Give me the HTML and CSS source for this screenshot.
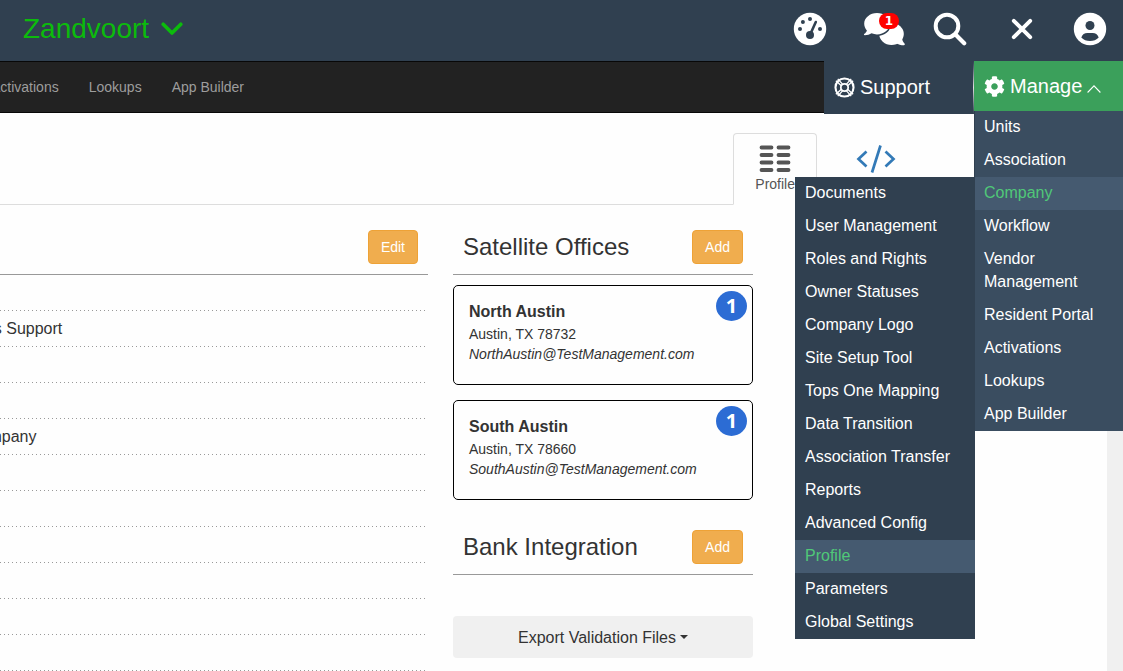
FILE: index.html
```html
<!DOCTYPE html>
<html lang="en">
<head>
<meta charset="utf-8">
<meta name="viewport" content="width=device-width, initial-scale=1">
<title>Zandvoort - Company Profile</title>
<link rel="stylesheet" href="styles.css">
</head>
<body>
<header class="topbar">
  <button type="button" class="brand">
    <span>Zandvoort</span>
    <svg width="22" height="15" viewBox="0 0 22 15" aria-hidden="true"><path d="M2.200 2.200 11 11l8.800-8.800" fill="none" stroke="currentColor" stroke-width="3.600" stroke-linecap="round" stroke-linejoin="round"/></svg>
  </button>
  <div class="tools">
    <button type="button" class="tool tool-gauge" aria-label="Dashboard">
      <svg width="34" height="34" viewBox="0 0 34 34"><circle cx="17" cy="17" r="16.200" fill="#fff"/><g fill="#304050"><circle cx="17" cy="7" r="2"/><circle cx="9.900" cy="9.900" r="2"/><circle cx="7" cy="17" r="2"/><circle cx="27" cy="17" r="2"/><circle cx="17" cy="23" r="4"/></g><path d="M17.600 21.500 22.800 10" stroke="#304050" stroke-width="2.600" stroke-linecap="round"/></svg>
    </button>
    <button type="button" class="tool" aria-label="Messages">
      <svg width="42" height="34" viewBox="0 0 42 34"><g fill="#fff"><ellipse cx="28.500" cy="22" rx="12.300" ry="11"/><path d="M39 26c.2 2 1 4 2.500 5.500.7.700.4 1.700-.5 1.700-3 0-5.800-.8-8-2.300z"/></g><g fill="#fff" stroke="#304050" stroke-width="3" paint-order="stroke"><path d="M14 1C7 1 1.200 5.800 1.200 11.800c0 2.500 1 4.800 2.700 6.600-.4 1.300-1.300 2.500-2.500 3.400-.8.700-.5 1.500.4 1.500 2.600 0 4.900-.8 6.700-2 1.700.7 3.600 1.100 5.500 1.100 7 0 12.700-4.800 12.700-10.700S21 1 14 1z"/></g></svg>
      <span class="count">1</span>
    </button>
    <button type="button" class="tool" aria-label="Search">
      <svg width="34" height="34" viewBox="0 0 34 34"><circle cx="14" cy="14" r="11.300" fill="none" stroke="#fff" stroke-width="4"/><path d="m22.500 22.500 8.700 8.700" stroke="#fff" stroke-width="4.200" stroke-linecap="round"/></svg>
    </button>
    <button type="button" class="tool tool-close" aria-label="Close">
      <svg width="22" height="22" viewBox="0 0 22 22"><path d="m2.800 2.800 16.400 16.400M19.200 2.800 2.800 19.200" stroke="#fff" stroke-width="3.900" stroke-linecap="round"/></svg>
    </button>
    <button type="button" class="tool tool-user" aria-label="Account">
      <svg width="34" height="34" viewBox="0 0 34 34"><circle cx="17" cy="17" r="16.200" fill="#fff"/><circle cx="17" cy="13.500" r="4.500" fill="#304050"/><path d="M8.300 25.400c1-2.900 3.300-4.300 6-4.300h5.400c2.700 0 5 1.400 6 4.300-2.200 2.300-5.200 3.600-8.700 3.600s-6.500-1.300-8.700-3.600z" fill="#304050"/></svg>
    </button>
  </div>
</header>

<nav class="navbar" aria-label="Main">
  <ul class="links">
    <li><a href="#activations">Activations</a></li>
    <li><a href="#lookups">Lookups</a></li>
    <li><a href="#app-builder">App Builder</a></li>
  </ul>
  <div class="actions">
    <button type="button" class="support">
      <svg width="21" height="21" viewBox="0 0 20 20" aria-hidden="true"><g fill="none" stroke="#fff"><circle cx="10" cy="10" r="8.600" stroke-width="2"/><circle cx="10" cy="10" r="3.500" stroke-width="1.700"/><path d="M1.800 3.600 7 8.300M3.600 1.800 8.300 7M16.400 1.800 11.700 7M18.200 3.600 13 8.300M18.200 16.400 13 11.700M16.400 18.200 11.700 13M3.600 18.200 8.300 13M1.800 16.400 7 11.700" stroke-width="1.300"/></g></svg>
      <span>Support</span>
    </button>
    <div class="manage-wrap">
      <button type="button" class="manage" aria-expanded="true">
        <svg width="21" height="21" viewBox="0 0 512 512" aria-hidden="true"><path fill="#fff" d="M487.400 315.700l-42.600-24.600c4.300-23.200 4.300-47 0-70.200l42.600-24.600c4.900-2.800 7.100-8.600 5.500-14-11.100-35.600-30-67.800-54.700-94.600-3.800-4.100-10-5.100-14.800-2.300L380.800 110c-17.900-15.400-38.500-27.300-60.800-35.100V25.800c0-5.600-3.900-10.500-9.400-11.700-36.700-8.200-74.300-7.800-109.200 0-5.500 1.200-9.400 6.100-9.400 11.700V75c-22.200 7.900-42.800 19.800-60.800 35.100L88.700 85.500c-4.900-2.800-11-1.900-14.800 2.300-24.700 26.700-43.600 58.900-54.700 94.600-1.700 5.400.6 11.200 5.500 14L67.300 221c-4.300 23.200-4.300 47 0 70.200l-42.600 24.600c-4.900 2.800-7.100 8.600-5.500 14 11.100 35.600 30 67.800 54.700 94.600 3.800 4.100 10 5.100 14.800 2.300l42.600-24.600c17.900 15.400 38.500 27.300 60.800 35.100v49.200c0 5.600 3.900 10.500 9.400 11.700 36.700 8.200 74.300 7.800 109.200 0 5.500-1.200 9.400-6.100 9.400-11.700v-49.200c22.200-7.900 42.800-19.800 60.800-35.100l42.600 24.600c4.900 2.800 11 1.900 14.800-2.300 24.700-26.700 43.600-58.900 54.700-94.600 1.500-5.500-.7-11.300-5.600-14.100zM256 336c-44.100 0-80-35.900-80-80s35.900-80 80-80 80 35.900 80 80-35.900 80-80 80z"/></svg>
        <span>Manage</span>
        <svg class="up" width="14" height="8" viewBox="0 0 14 8" aria-hidden="true"><path d="m.6 7.500 6.400-6.600 6.400 6.600" fill="none" stroke="#fff" stroke-width="1.100"/></svg>
      </button>
      <ul class="menu">
        <li><a href="#units">Units</a></li>
        <li><a href="#association">Association</a></li>
        <li class="parent">
          <a class="active" href="#company">Company</a>
          <ul class="submenu">
            <li><a href="#documents">Documents</a></li>
            <li><a href="#users">User Management</a></li>
            <li><a href="#roles">Roles and Rights</a></li>
            <li><a href="#statuses">Owner Statuses</a></li>
            <li><a href="#logo">Company Logo</a></li>
            <li><a href="#setup">Site Setup Tool</a></li>
            <li><a href="#mapping">Tops One Mapping</a></li>
            <li><a href="#transition">Data Transition</a></li>
            <li><a href="#transfer">Association Transfer</a></li>
            <li><a href="#reports">Reports</a></li>
            <li><a href="#advanced">Advanced Config</a></li>
            <li><a class="active" href="#profile">Profile</a></li>
            <li><a href="#parameters">Parameters</a></li>
            <li><a href="#settings">Global Settings</a></li>
          </ul>
        </li>
        <li><a href="#workflow">Workflow</a></li>
        <li><a href="#vendors">Vendor Management</a></li>
        <li><a href="#residents">Resident Portal</a></li>
        <li><a href="#menu-activations">Activations</a></li>
        <li><a href="#menu-lookups">Lookups</a></li>
        <li><a href="#menu-builder">App Builder</a></li>
      </ul>
    </div>
  </div>
</nav>

<main class="page">
  <div class="tabs">
    <a class="tab current" href="#profile">
      <svg width="32" height="28" viewBox="0 0 32 28" aria-hidden="true"><path d="M2.500 2.500h10M19.500 2.500h10M2.500 10h10M19.500 10h10M2.500 17.500h10M19.500 17.500h10M2.500 25h10M19.500 25h10" stroke="#555" stroke-width="3.800" stroke-linecap="round"/></svg>
      <span>Profile</span>
    </a>
    <a class="tab code" href="#code" aria-label="Integrations">
      <svg width="40" height="32" viewBox="0 0 40 32" aria-hidden="true"><path d="M10.500 8.500 2.500 16l8 7.500M29.500 8.500l8 7.500-8 7.500M24.500 2.500l-8.500 27" fill="none" stroke="#337ab7" stroke-width="2.700"/></svg>
    </a>
  </div>
  <div class="columns">
    <section class="details">
      <div class="head head-end"><button type="button" class="btn">Edit</button></div>
      <ul class="rows">
        <li></li>
        <li><span>Tops Support</span></li>
        <li></li>
        <li></li>
        <li><span>Company</span></li>
        <li></li>
        <li></li>
        <li></li>
        <li></li>
        <li></li>
        <li></li>
      </ul>
    </section>
    <div class="side">
      <section>
        <div class="head"><h2>Satellite Offices</h2><button type="button" class="btn">Add</button></div>
        <div class="cards">
          <article class="card">
            <h3>North Austin</h3>
            <p>Austin, TX 78732</p>
            <p class="mail">NorthAustin@TestManagement.com</p>
            <span class="badge">1</span>
          </article>
          <article class="card">
            <h3>South Austin</h3>
            <p>Austin, TX 78660</p>
            <p class="mail">SouthAustin@TestManagement.com</p>
            <span class="badge">1</span>
          </article>
        </div>
      </section>
      <section>
        <div class="head"><h2>Bank Integration</h2><button type="button" class="btn">Add</button></div>
        <button type="button" class="export">Export Validation Files <span class="caret"></span></button>
      </section>
    </div>
  </div>
</main>
</body>
</html>
```

FILE: styles.css
```css
* { box-sizing: border-box; }

body {
  margin: 0;
  min-height: 100vh;
  display: flex;
  flex-direction: column;
  overflow: hidden;
  background: #fefefe;
  color: #333;
  font: 16px/23px "Liberation Sans", Arial, sans-serif;
}

ul { margin: 0; padding: 0; list-style: none; }
h2, h3, p { margin: 0; }
a { color: inherit; text-decoration: none; }
button { margin: 0; border: 0; background: none; color: inherit; font: inherit; cursor: pointer; }
svg { display: block; flex: none; }

/* Top bar */
.topbar {
  display: flex;
  justify-content: space-between;
  align-items: center;
  padding: 12px 16px 15px 23px;
  background: #304050;
}
.brand {
  display: flex;
  align-items: center;
  gap: 12px;
  padding: 0;
  color: #0cbb0c;
  font-size: 28px;
  line-height: 32px;
}
.tools { display: flex; align-items: center; gap: 24px; }
.tool {
  position: relative;
  display: flex;
  justify-content: center;
  width: 42px;
  padding: 0;
}
.tool-gauge { width: 58px; }
.tool-close { width: 54px; }
.tool-user { width: 34px; }
.count {
  position: absolute;
  top: 1px;
  left: 16px;
  width: 20px;
  border-radius: 8px;
  background: #f00;
  color: #fff;
  font: bold 12px/16px "DejaVu Sans", sans-serif;
  text-align: center;
}

/* Navigation bar */
.navbar {
  display: flex;
  justify-content: space-between;
  height: 52px;
  border-top: 1px solid #080808;
  border-bottom: 1px solid #080808;
  background: #222;
}
.links {
  display: flex;
  align-items: center;
  margin-left: -24px;
  color: #9d9d9d;
  font-size: 14px;
  line-height: 20px;
}
.links a { display: block; padding: 15px; }
.actions {
  display: flex;
  align-items: flex-start;
  margin-top: -1px;
  color: #fff;
  font-size: 20px;
}
.support,
.manage {
  display: flex;
  align-items: center;
  gap: 5px;
  padding: 0 10px;
}
.support {
  width: 150px;
  height: 53px;
  background: linear-gradient(#304050, #ddd, #304050) right / 1px 100% no-repeat #304050;
}
.manage-wrap { position: relative; z-index: 2; width: 149px; }
.manage { width: 100%; height: 50px; background: #3ba05b; }
.up { margin-top: 5px; }

/* Drop-down menus */
.menu {
  position: absolute;
  top: 100%;
  left: 0;
  right: 0;
  border-left: 1px solid #304050;
  background: #3a4d60;
  font-size: 16px;
}
.menu a { display: block; padding: 4px 9px 6px; }
.menu .active { background: #455a70; color: #50c878; }
.parent { position: relative; }
.submenu {
  position: absolute;
  top: 0;
  right: 100%;
  width: 180px;
  background: #304050;
}
.submenu a { padding: 4px 10px 6px; }

/* Page */
.page {
  flex: 1;
  padding-top: 20px;
  border-right: 16px solid #f0f0f0;
}
.tabs {
  display: flex;
  justify-content: flex-end;
  gap: 2px;
  padding-right: 174px;
  border-bottom: 1px solid #ddd;
}
.tab {
  display: flex;
  flex-direction: column;
  align-items: center;
  margin-bottom: -1px;
  border: 1px solid transparent;
  border-radius: 4px 4px 0 0;
  padding: 11px 21px 10px;
  font-size: 14px;
  line-height: 20px;
}
.current { border-color: #ddd #ddd #fefefe; background: #fefefe; color: #555; gap: 1px; }
.code { width: 114px; padding-top: 9px; }

.columns {
  display: grid;
  grid-template-columns: minmax(0, 1fr) 300px;
  gap: 25px;
  padding: 15px 354px 0 0;
}
.head {
  display: flex;
  justify-content: space-between;
  align-items: center;
  padding: 10px;
  border-bottom: 1px solid #999;
}
.head-end { justify-content: flex-end; }
h2 { font-size: 24px; font-weight: 400; line-height: 26px; }
.btn {
  padding: 6px 12px;
  border: 1px solid #eea236;
  border-radius: 4px;
  background: #f0ad4e;
  color: #fff;
  font-size: 14px;
  line-height: 20px;
}

.rows li {
  height: 36px;
  margin-right: 2px;
  padding-top: 6px;
  background: repeating-linear-gradient(90deg, #999 0 1px, transparent 1px 4px) bottom / 100% 1px no-repeat;
}
.rows span { margin-left: -32px; }

.side { display: flex; flex-direction: column; gap: 20px; }
.cards { display: flex; flex-direction: column; gap: 15px; margin-top: 10px; }
.card {
  position: relative;
  min-height: 100px;
  padding: 14px 15px;
  border: 1px solid #000;
  border-radius: 5px;
  font-size: 14px;
  line-height: 20px;
}
h3 { font-size: 16px; line-height: 24px; }
.mail { font-style: italic; }
.badge {
  position: absolute;
  top: 5px;
  right: 5px;
  width: 31px;
  border-radius: 50%;
  background: #2c6cd4;
  color: #fff;
  font: bold 20px/30px "Open Sans", sans-serif;
  text-align: center;
}
.export {
  display: flex;
  justify-content: center;
  align-items: center;
  gap: 4px;
  width: 100%;
  height: 42px;
  margin-top: 41px;
  border-radius: 4px;
  background: #f0f0f0;
}
.caret { border: 4px solid transparent; border-top-color: #333; border-bottom: 0; }
```
